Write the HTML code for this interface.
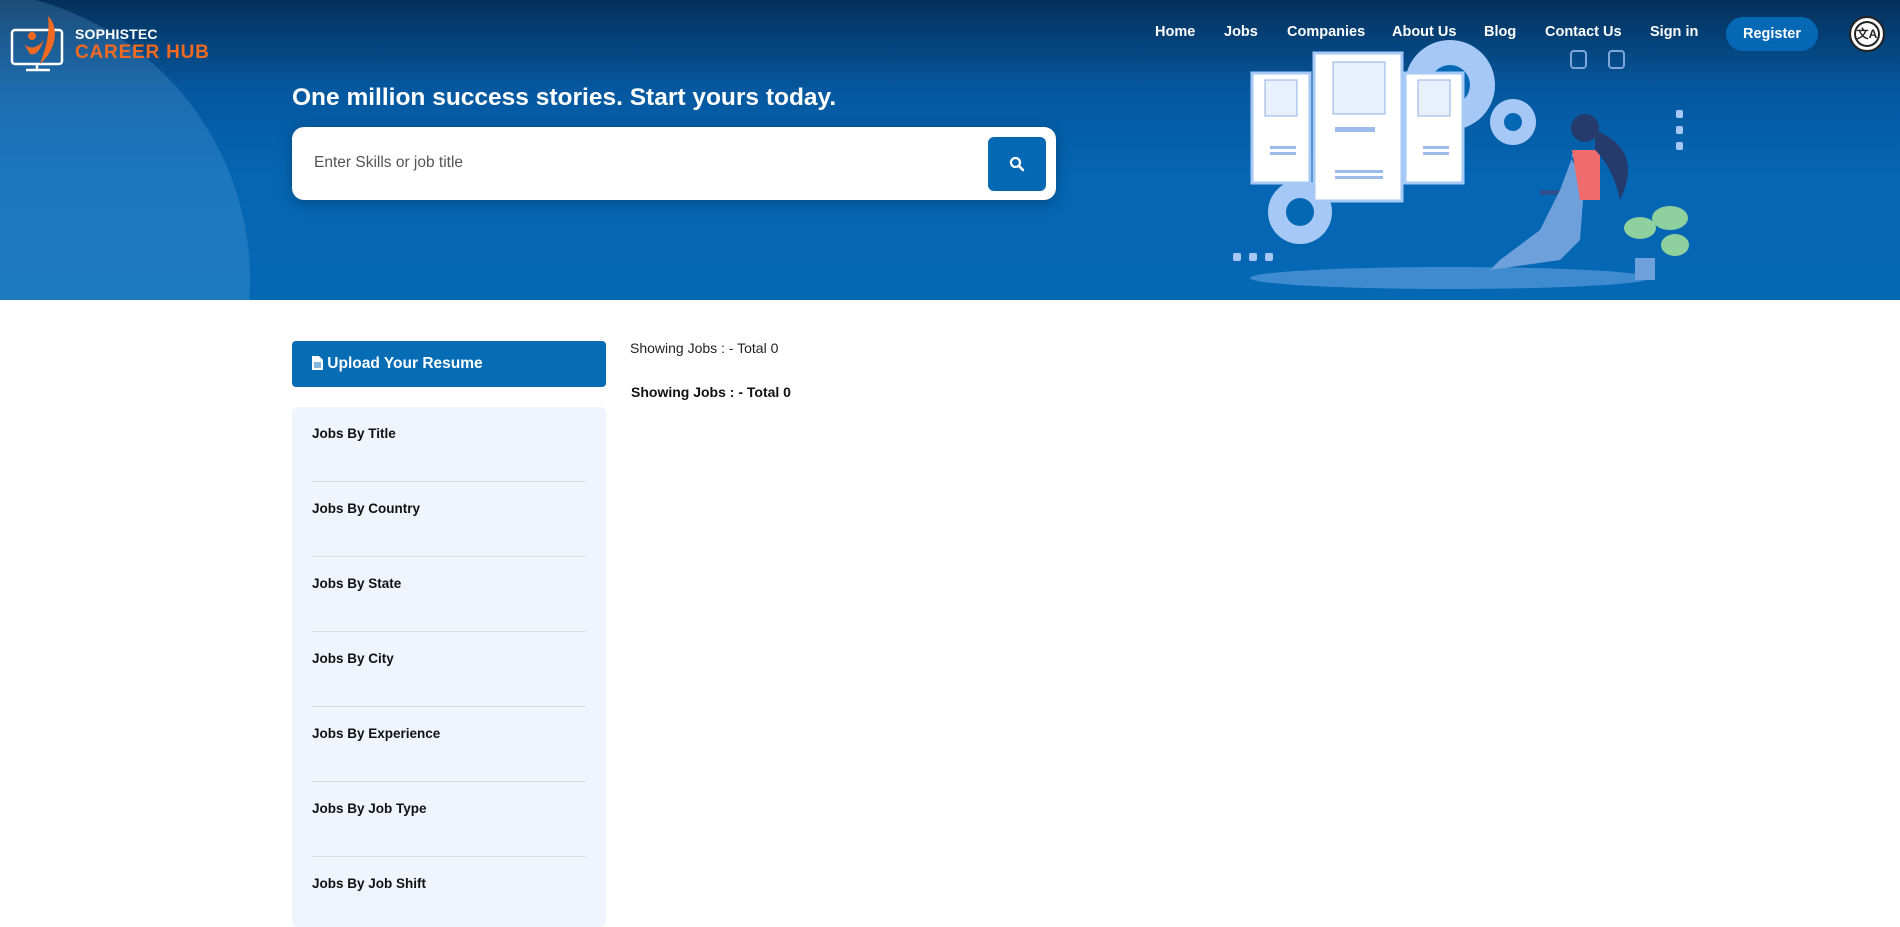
<!DOCTYPE html>
<html><head><meta charset="utf-8"><style>
*{margin:0;padding:0;box-sizing:border-box}
body{width:1900px;height:915px;overflow:hidden;background:#fff;font-family:"Liberation Sans",Arial,sans-serif;position:relative}
.hdr{position:absolute;left:0;top:0;width:1900px;height:300px;background:linear-gradient(180deg,#04305a 0%,#05589f 30%,#0566b3 60%,#0568b5 100%);overflow:hidden}
.circ{position:absolute;left:-330px;top:-10px;width:580px;height:580px;border-radius:50%;background:rgba(120,180,230,0.22)}
.nav{position:absolute;top:24px;color:#fff;font-weight:bold;font-size:14.5px}
.ab{position:absolute}
.side{position:absolute;left:292px;top:407px;width:314px;height:520px;background:#f0f5fd;border-radius:6px}
.it{position:absolute;left:20px;font-weight:bold;font-size:13.5px;color:#111}
.sep{position:absolute;left:20px;width:274px;height:1px;background:#d8dbe0}
</style></head><body>
<div class="hdr">
 <div class="circ"></div>
 <!-- logo -->
 <svg class="ab" style="left:10px;top:14px" width="60" height="58" viewBox="0 0 60 58">
  <rect x="2" y="16" width="50" height="34" rx="3" fill="none" stroke="#fff" stroke-width="2.5"/>
  <line x1="27" y1="50" x2="27" y2="56" stroke="#fff" stroke-width="2.5"/>
  <line x1="16" y1="56" x2="40" y2="56" stroke="#fff" stroke-width="2.5"/>
  <circle cx="22" cy="22" r="4" fill="#f26a21"/>
  <path d="M38 2 C50 14 46 36 30 50 C36 34 40 20 38 2Z" fill="#f26a21"/>
  <path d="M14 30 C20 36 28 34 34 26 C30 36 26 42 20 40Z" fill="#f26a21"/>
 </svg>
 <div class="ab" style="left:75px;top:26px;color:#fff;font-weight:bold;font-size:14px;letter-spacing:0.2px">SOPHISTEC</div>
 <div class="ab" style="left:75px;top:42px;color:#f26a21;font-weight:bold;font-size:19px;letter-spacing:0.8px">CAREER HUB</div>
 <div class="nav" style="left:1155px">Home</div>
 <div class="nav" style="left:1224px">Jobs</div>
 <div class="nav" style="left:1287px">Companies</div>
 <div class="nav" style="left:1392px">About Us</div>
 <div class="nav" style="left:1484px">Blog</div>
 <div class="nav" style="left:1545px">Contact Us</div>
 <div class="nav" style="left:1650px">Sign in</div>
 <div class="ab" style="left:1726px;top:17px;width:92px;height:34px;border-radius:17px;background:#0568b5;color:#fff;font-weight:bold;font-size:14.5px;text-align:center;line-height:34px">Register</div>
 <div class="ab" style="left:1849px;top:16px;width:36px;height:36px;border-radius:50%;background:#fff;border:2px solid #222;box-shadow:inset 0 0 0 3px #fff,inset 0 0 0 5px #222;font-size:12px;font-weight:bold;text-align:center;line-height:32px;color:#222">文A</div>
 <div class="ab" style="left:292px;top:84px;color:#fff;font-weight:bold;font-size:24.5px">One million success stories. Start yours today.</div>
 <div class="ab" style="left:292px;top:127px;width:764px;height:73px;background:#fff;border-radius:12px;box-shadow:0 4px 14px rgba(0,0,0,0.25)">
  <div class="ab" style="left:22px;top:27px;color:#555;font-size:15.5px">Enter Skills or job title</div>
  <div class="ab" style="left:696px;top:10px;width:58px;height:54px;background:#0568b5;border-radius:6px">
   <svg class="ab" style="left:21px;top:19px" width="16" height="16" viewBox="0 0 16 16"><circle cx="6.5" cy="6.5" r="4.5" fill="none" stroke="#fff" stroke-width="2.2"/><line x1="10" y1="10" x2="14" y2="14" stroke="#fff" stroke-width="2.5" stroke-linecap="round"/></svg>
  </div>
 </div>
 <!-- illustration -->
 <svg class="ab" style="left:1220px;top:20px" width="480" height="280" viewBox="1220 20 480 280">
  <g fill="#a6c8f7">
   <circle cx="1450" cy="85" r="45"/><circle cx="1300" cy="212" r="32"/><circle cx="1513" cy="122" r="23"/>
  </g>
  <circle cx="1450" cy="85" r="20" fill="#0568b5"/><circle cx="1300" cy="212" r="14" fill="#0568b5"/><circle cx="1513" cy="122" r="9" fill="#0568b5"/>
  <ellipse cx="1450" cy="278" rx="200" ry="11" fill="#3e8bd0"/>
  <rect x="1252" y="73" width="58" height="110" fill="#fff" stroke="#a6c8f7" stroke-width="3"/>
  <rect x="1405" y="73" width="58" height="110" fill="#fff" stroke="#a6c8f7" stroke-width="3"/>
  <rect x="1314" y="53" width="88" height="148" fill="#fff" stroke="#a6c8f7" stroke-width="3"/>
  <rect x="1265" y="80" width="32" height="36" fill="#e8f0fb" stroke="#8fb0e0"/>
  <rect x="1418" y="80" width="32" height="36" fill="#e8f0fb" stroke="#8fb0e0"/>
  <rect x="1333" y="62" width="52" height="52" fill="#e8f0fb" stroke="#8fb0e0"/>
  <g fill="#9bbbe8"><rect x="1270" y="146" width="26" height="3"/><rect x="1270" y="152" width="26" height="3"/><rect x="1423" y="146" width="26" height="3"/><rect x="1423" y="152" width="26" height="3"/><rect x="1335" y="170" width="48" height="3"/><rect x="1335" y="176" width="48" height="3"/><rect x="1335" y="127" width="40" height="5"/></g>
  <rect x="1540" y="190" width="60" height="5" fill="#2d4f8e"/>
  <path d="M1575 150 C1565 160 1580 170 1585 175 L1580 240 L1560 260 L1490 270 L1500 260 L1540 230 L1560 190Z" fill="#6ea0dc"/>
  <path d="M1572 150 L1600 150 L1600 200 L1580 200Z" fill="#ef6c6c"/>
  <circle cx="1585" cy="128" r="14" fill="#253b6e"/>
  <path d="M1595 130 C1620 140 1640 160 1620 200 C1615 175 1605 160 1595 150Z" fill="#253b6e"/>
  <g fill="#8fd19e"><ellipse cx="1670" cy="218" rx="18" ry="12"/><ellipse cx="1640" cy="228" rx="16" ry="11"/><ellipse cx="1675" cy="245" rx="14" ry="11"/></g>
  <rect x="1635" y="258" width="20" height="22" fill="#6ea0dc"/>
  <g fill="#a6c8f7"><rect x="1676" y="110" width="7" height="8" rx="2"/><rect x="1676" y="126" width="7" height="8" rx="2"/><rect x="1676" y="142" width="7" height="8" rx="2"/><rect x="1233" y="253" width="8" height="8" rx="2"/><rect x="1249" y="253" width="8" height="8" rx="2"/><rect x="1265" y="253" width="8" height="8" rx="2"/></g>
  <rect x="1571" y="51" width="15" height="17" rx="3" fill="none" stroke="#7fa6d8" stroke-width="2"/>
  <rect x="1609" y="51" width="15" height="17" rx="3" fill="none" stroke="#7fa6d8" stroke-width="2"/>
 </svg>
</div>
<div class="ab" style="left:292px;top:341px;width:314px;height:46px;background:#066db5;border-radius:4px;color:#fff;font-weight:bold;font-size:15.5px;line-height:46px;padding-left:20px">
 <svg style="vertical-align:-2px" width="11" height="14" viewBox="0 0 11 14"><path d="M0 0h7l4 4v10H0Z" fill="#fff"/><g stroke="#066db5" stroke-width="1"><line x1="2" y1="7" x2="9" y2="7"/><line x1="2" y1="9" x2="9" y2="9"/><line x1="2" y1="11" x2="9" y2="11"/></g></svg> Upload Your Resume</div>
<div class="side">
 <div class="it" style="top:19px">Jobs By Title</div><div class="sep" style="top:74px"></div>
 <div class="it" style="top:94px">Jobs By Country</div><div class="sep" style="top:149px"></div>
 <div class="it" style="top:169px">Jobs By State</div><div class="sep" style="top:224px"></div>
 <div class="it" style="top:244px">Jobs By City</div><div class="sep" style="top:299px"></div>
 <div class="it" style="top:319px">Jobs By Experience</div><div class="sep" style="top:374px"></div>
 <div class="it" style="top:394px">Jobs By Job Type</div><div class="sep" style="top:449px"></div>
 <div class="it" style="top:469px">Jobs By Job Shift</div>
</div>
<div class="ab" style="left:630px;top:340px;font-size:14px;color:#222">Showing Jobs : - Total 0</div>
<div class="ab" style="left:631px;top:384px;font-size:14px;font-weight:bold;color:#111">Showing Jobs : - Total 0</div>
</body></html>
